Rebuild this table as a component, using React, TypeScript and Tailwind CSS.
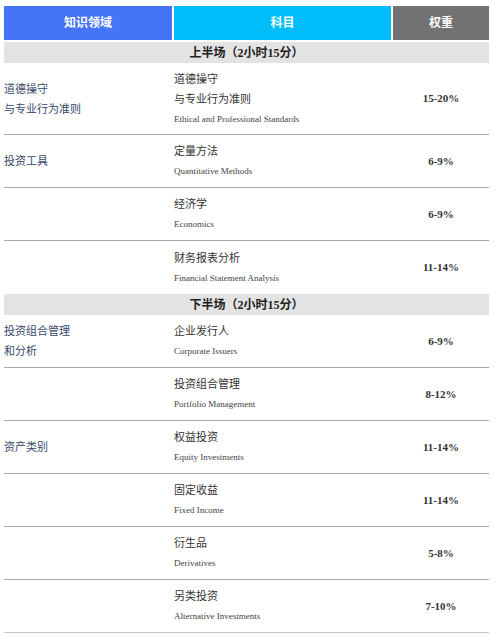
const font = "font-['Liberation_Serif','Noto_Sans_CJK_SC',serif]";

type Row = { area?: string[]; zh: string[]; en: string; weight: string };
type Block = { title: string; rows: Row[] };

const blocks: Block[] = [
  {
    title: "上半场（2小时15分）",
    rows: [
      {
        area: ["道德操守", "与专业行为准则"],
        zh: ["道德操守", "与专业行为准则"],
        en: "Ethical and Professional Standards",
        weight: "15-20%",
      },
      { area: ["投资工具"], zh: ["定量方法"], en: "Quantitative Methods", weight: "6-9%" },
      { zh: ["经济学"], en: "Economics", weight: "6-9%" },
      { zh: ["财务报表分析"], en: "Financial Statement Analysis", weight: "11-14%" },
    ],
  },
  {
    title: "下半场（2小时15分）",
    rows: [
      { area: ["投资组合管理", "和分析"], zh: ["企业发行人"], en: "Corporate Issuers", weight: "6-9%" },
      { zh: ["投资组合管理"], en: "Portfolio Management", weight: "8-12%" },
      { area: ["资产类别"], zh: ["权益投资"], en: "Equity Investments", weight: "11-14%" },
      { zh: ["固定收益"], en: "Fixed Income", weight: "11-14%" },
      { zh: ["衍生品"], en: "Derivatives", weight: "5-8%" },
      { zh: ["另类投资"], en: "Alternative Investments", weight: "7-10%" },
    ],
  },
];

const cols = "grid grid-cols-[168px_217px_96px] gap-x-[2px]";

export default function App() {
  return (
    <div className={`min-h-screen bg-white pt-[6px] pl-[4px] ${font}`}>
      <div className="w-[485px]">
        {/* Header */}
        <div className={`${cols} h-[34px] text-[12px] font-bold text-white`}>
          <div className="flex items-center justify-center bg-[#4674f6]">知识领域</div>
          <div className="flex items-center justify-center bg-[#00bcf8]">科目</div>
          <div className="flex items-center justify-center bg-[#727272]">权重</div>
        </div>

        {blocks.map((b, bi) => (
          <div key={bi}>
            <div
              className={`${bi === 0 ? "mt-[2px]" : ""} flex h-[21px] items-center justify-center bg-[#e3e3e3] text-[12px] font-bold text-[#222]`}
            >
              {b.title}
            </div>
            {b.rows.map((r, ri) => {
              const last = ri === b.rows.length - 1;
              const border =
                last && bi === 0
                  ? ""
                  : last
                    ? "border-b border-[#c8c8c8]"
                    : "border-b border-[#a8a8a8]";
              const h = r.zh.length > 1 ? "h-[72px]" : "h-[53px]";
              return (
                <div key={ri} className={`${cols} ${h} ${border}`}>
                  <div className="flex flex-col justify-center text-[11px] leading-[20px] text-[#36486a]">
                    {r.area?.map((t) => (
                      <div key={t}>{t}</div>
                    ))}
                  </div>
                  <div className="flex flex-col justify-center text-[11px] leading-[20px] text-[#333]">
                    {r.zh.map((t) => (
                      <div key={t}>{t}</div>
                    ))}
                    <div className="text-[9px] text-[#444]">{r.en}</div>
                  </div>
                  <div className="flex items-center justify-center text-[11px] font-bold text-[#333]">
                    {r.weight}
                  </div>
                </div>
              );
            })}
          </div>
        ))}
      </div>
    </div>
  );
}
